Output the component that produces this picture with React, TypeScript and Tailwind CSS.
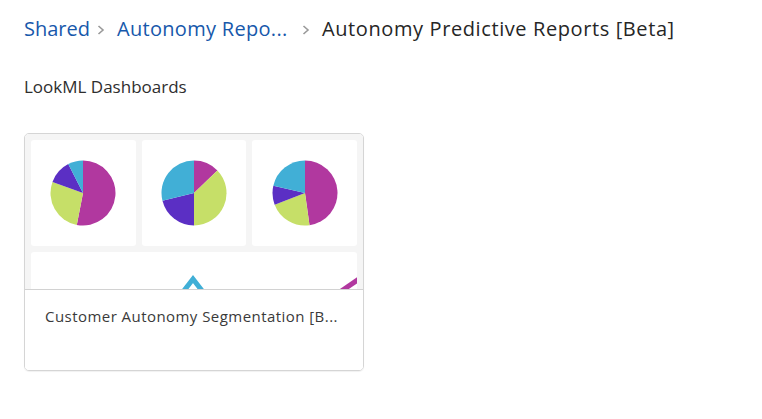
import React from "react";

const COLORS = {
  magenta: "#b1389f",
  lime: "#c6df68",
  purple: "#5b2fc4",
  cyan: "#41afd6",
};

type Slice = { from: number; to: number; color: string };

function arc(cx: number, cy: number, r: number, from: number, to: number) {
  const rad = (a: number) => ((a - 90) * Math.PI) / 180;
  const x1 = cx + r * Math.cos(rad(from));
  const y1 = cy + r * Math.sin(rad(from));
  const x2 = cx + r * Math.cos(rad(to));
  const y2 = cy + r * Math.sin(rad(to));
  const large = to - from > 180 ? 1 : 0;
  return `M${cx},${cy} L${x1},${y1} A${r},${r} 0 ${large} 1 ${x2},${y2} Z`;
}

const pies: Slice[][] = [
  [
    { from: 0, to: 191, color: COLORS.magenta },
    { from: 191, to: 290, color: COLORS.lime },
    { from: 290, to: 333, color: COLORS.purple },
    { from: 333, to: 360, color: COLORS.cyan },
  ],
  [
    { from: 0, to: 46, color: COLORS.magenta },
    { from: 46, to: 180, color: COLORS.lime },
    { from: 180, to: 256, color: COLORS.purple },
    { from: 256, to: 360, color: COLORS.cyan },
  ],
  [
    { from: 0, to: 172, color: COLORS.magenta },
    { from: 172, to: 249, color: COLORS.lime },
    { from: 249, to: 283, color: COLORS.purple },
    { from: 283, to: 360, color: COLORS.cyan },
  ],
];

function Pie({ slices }: { slices: Slice[] }) {
  return (
    <svg width="66" height="66" viewBox="0 0 66 66">
      {slices.map((s, i) => (
        <path key={i} d={arc(33, 33, 32.5, s.from, s.to)} fill={s.color} />
      ))}
    </svg>
  );
}

function Chevron() {
  return (
    <svg width="8" height="10" viewBox="0 0 8 10" className="ml-[7px] mr-[12px] mt-[3px] shrink-0">
      <path d="M1.5 1 L6 5 L1.5 9" fill="none" stroke="#9a9a9a" strokeWidth="1.6" />
    </svg>
  );
}

export default function App() {
  return (
    <div
      className="min-h-[419px] w-[762px] bg-white px-6 pt-[14px]"
      style={{ fontFamily: '"Open Sans", "Noto Sans", Arial, sans-serif' }}
    >
      <nav className="flex items-center h-[29px] text-[20px] leading-none whitespace-nowrap">
        <a className="text-[#1758ab]">Shared</a>
        <Chevron />
        <a className="text-[#1758ab] w-[178px] tracking-[0.3px]">Autonomy Repo...</a>
        <Chevron />
        <span className="text-[#262626] tracking-[0.6px]">Autonomy Predictive Reports [Beta]</span>
      </nav>

      <h2 className="mt-[32px] text-[17px] leading-[24px] text-[#2e2e2e]">LookML Dashboards</h2>

      <div className="mt-[34px] w-[340px] h-[238px] rounded-[5px] border border-[#d5d5d5] overflow-hidden flex flex-col shadow-[0_1px_1px_rgba(0,0,0,0.06)]">
        <div className="h-[156px] bg-[#f5f5f5] px-[6px] pt-[6px] overflow-hidden border-b border-[#d2d2d2]">
          <div className="grid grid-cols-3 gap-[6px]">
            {pies.map((p, i) => (
              <div key={i} className="h-[106px] bg-white rounded-[3px] flex items-center justify-center">
                <Pie slices={p} />
              </div>
            ))}
          </div>
          <div className="mt-[6px] h-[60px] bg-white rounded-[3px] relative overflow-hidden">
            <svg width="326" height="40" viewBox="0 0 326 40" className="absolute left-0 top-0">
              <path d="M152 40 L162 27 L172 40" fill="none" stroke={COLORS.cyan} strokeWidth="5" />
              <path d="M309 40 L328 27" fill="none" stroke={COLORS.magenta} strokeWidth="5" />
            </svg>
          </div>
        </div>
        <div className="flex-1 bg-white px-5 pt-[15px]">
          <p className="text-[15px] leading-[22px] font-medium tracking-[0.45px] text-[#3a3a3a] whitespace-nowrap">
            Customer Autonomy Segmentation [B...
          </p>
        </div>
      </div>
    </div>
  );
}
